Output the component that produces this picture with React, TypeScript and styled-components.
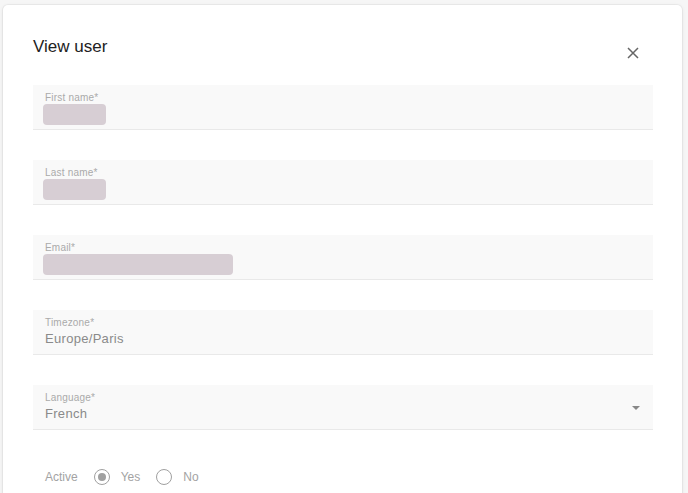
import React from "react";
import styled, { createGlobalStyle } from "styled-components";

const Global = createGlobalStyle`
  html, body { margin: 0; padding: 0; background: #f6f6f6; }
  body { font-family: "Liberation Sans", Arial, sans-serif; }
`;

const Page = styled.div`
  padding: 5px 6px 0 3px;
  height: 488px;
  overflow: hidden;
`;

const Card = styled.div`
  background: #fff;
  border-radius: 5px;
  box-shadow: 0 0 0 1px rgba(0,0,0,0.04), 0 1px 4px rgba(0,0,0,0.08);
  padding: 32px 29px 40px 30px;
  min-height: 520px;
`;

const Header = styled.div`
  display: flex;
  justify-content: space-between;
  align-items: flex-start;
  margin-bottom: 20px;
`;

const Title = styled.h2`
  margin: 0;
  font-size: 17px;
  line-height: 20px;
  font-weight: 400;
  color: #222;
`;

const CloseButton = styled.button`
  margin-top: 4px;
  margin-right: 8px;
  width: 24px;
  height: 24px;
  padding: 0;
  border: 0;
  background: transparent;
  display: flex;
  align-items: center;
  justify-content: center;
  color: #666;
`;

const Fields = styled.div`
  display: flex;
  flex-direction: column;
  gap: 30px;
`;

const Field = styled.div`
  position: relative;
  background: #f9f9f9;
  border-bottom: 1px solid #e9e9e9;
  padding: 7px 12px 0 12px;
  box-sizing: content-box;
  height: 37px;
`;

const Label = styled.div`
  font-size: 10px;
  line-height: 12px;
  color: #aaa;
  letter-spacing: 0.2px;
`;

const Value = styled.div`
  font-size: 13px;
  line-height: 18px;
  margin-top: 1px;
  color: #8a8a8a;
  letter-spacing: 0.3px;
`;

const Redacted = styled.div<{ $w: number }>`
  margin-top: 0;
  margin-left: -2px;
  width: ${(p) => p.$w}px;
  height: 21px;
  border-radius: 4px;
  background: #d7ced4;
`;

const Arrow = styled.div`
  position: absolute;
  right: 13px;
  top: 21px;
  width: 0;
  height: 0;
  border-left: 4.5px solid transparent;
  border-right: 4.5px solid transparent;
  border-top: 4.5px solid #888;
`;

const RadioRow = styled.div`
  display: flex;
  align-items: center;
  margin-top: 38px;
  padding-left: 12px;
  height: 18px;
  font-size: 12px;
  color: #a3a3a3;
`;

const RowLabel = styled.span`
  margin-right: 16px;
`;

const Option = styled.label`
  display: flex;
  align-items: center;
  gap: 11px;
  margin-right: 16px;
`;

const Radio = styled.span<{ $checked?: boolean }>`
  width: 16px;
  height: 16px;
  box-sizing: border-box;
  border: 1.5px solid #a0a0a0;
  border-radius: 50%;
  display: flex;
  align-items: center;
  justify-content: center;
  &::after {
    content: "";
    width: 8px;
    height: 8px;
    border-radius: 50%;
    background: ${(p) => (p.$checked ? "#a0a0a0" : "transparent")};
  }
`;

export default function App() {
  return (
    <>
      <Global />
      <Page>
        <Card>
          <Header>
            <Title>View user</Title>
            <CloseButton aria-label="close">
              <svg width="12" height="12" viewBox="0 0 12 12">
                <path d="M1 1L11 11M11 1L1 11" stroke="#666" strokeWidth="1.5" />
              </svg>
            </CloseButton>
          </Header>
          <Fields>
            <Field>
              <Label>First name*</Label>
              <Redacted $w={63} />
            </Field>
            <Field>
              <Label>Last name*</Label>
              <Redacted $w={63} />
            </Field>
            <Field>
              <Label>Email*</Label>
              <Redacted $w={190} />
            </Field>
            <Field>
              <Label>Timezone*</Label>
              <Value>Europe/Paris</Value>
            </Field>
            <Field>
              <Label>Language*</Label>
              <Value>French</Value>
              <Arrow />
            </Field>
          </Fields>
          <RadioRow>
            <RowLabel>Active</RowLabel>
            <Option>
              <Radio $checked />
              Yes
            </Option>
            <Option>
              <Radio />
              No
            </Option>
          </RadioRow>
        </Card>
      </Page>
    </>
  );
}
